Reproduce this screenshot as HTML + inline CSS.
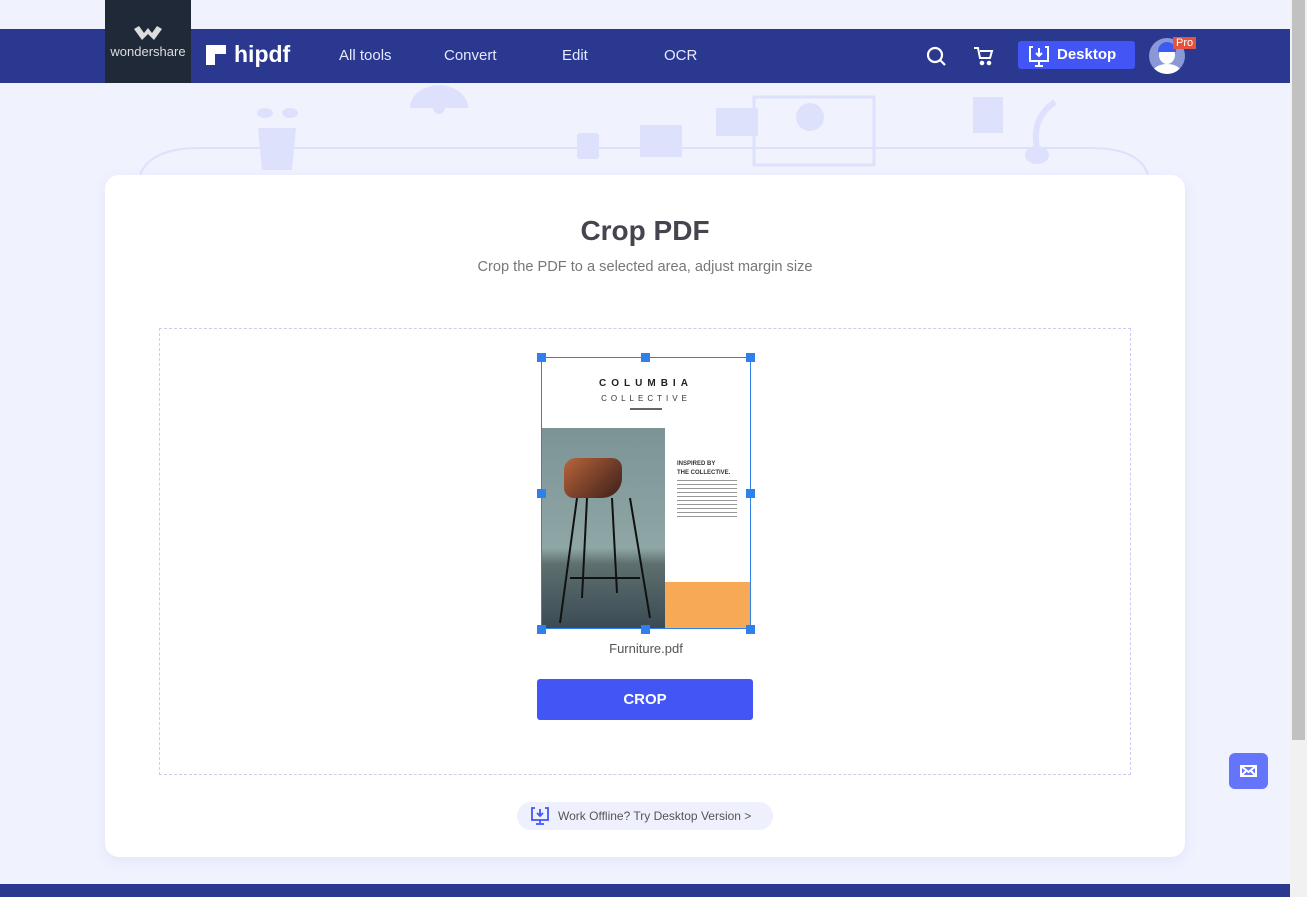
<!DOCTYPE html>
<html><head><meta charset="utf-8"><style>
*{box-sizing:border-box;margin:0;padding:0}
body{width:1307px;height:897px;overflow:hidden;background:#f0f2fe;font-family:"Liberation Sans",sans-serif;position:relative}
.nav{position:absolute;left:0;top:29px;width:1290px;height:54px;background:#2b3890}
.ws{position:absolute;left:105px;top:0;width:86px;height:83px;background:#1f2937;color:#ddd;font-size:13px;text-align:center}
.nav a{position:absolute;top:18px;color:#e6e9ff;font-size:15px;text-decoration:none}
.card{position:absolute;left:105px;top:175px;width:1080px;height:682px;background:#fff;border-radius:14px;box-shadow:0 4px 14px rgba(80,90,200,.08)}
h1{position:absolute;top:40px;width:100%;text-align:center;font-size:28px;color:#454550;font-weight:bold}
.sub{position:absolute;top:84px;width:100%;text-align:center;font-size:14.6px;color:#777}
.drop{position:absolute;left:54px;top:153px;width:972px;height:447px;border:1px dashed #c9ccf5}
.pg{position:absolute;left:381px;top:28px;width:210px;height:272px;border:1px solid #2f80ed;background:#fff;overflow:hidden}
.h{position:absolute;width:9px;height:9px;background:#2f80ed}
.btn{position:absolute;left:377px;top:350px;width:216px;height:41px;background:#4255f5;color:#fff;font-weight:bold;font-size:15px;text-align:center;line-height:41px;border-radius:3px}
.off{position:absolute;left:412px;top:627px;width:256px;height:28px;border-radius:14px;background:#eef0fd;font-size:12px;color:#555;line-height:28px;padding-left:41px}
.sb{position:absolute;right:0;top:0;width:17px;height:897px;background:#f1f1f1}
</style></head><body>
<svg style="position:absolute;left:140px;top:83px" width="1010" height="92" fill="#dde1fc">
<path d="M0 92 Q10 65 60 65 L950 65 Q1000 65 1008 92" fill="none" stroke="#dde1fc" stroke-width="2"/>
<path d="M118 45 h38 l-4 42 h-30z"/><ellipse cx="125" cy="30" rx="8" ry="5"/><ellipse cx="150" cy="30" rx="8" ry="5"/>
<path d="M270 25 a28 22 0 0 1 58 0z"/><circle cx="299" cy="25" r="6"/>
<rect x="437" y="50" width="22" height="26" rx="3"/><rect x="500" y="42" width="42" height="32"/>
<rect x="576" y="25" width="42" height="28"/><rect x="614" y="14" width="120" height="68" fill="none" stroke="#dde1fc" stroke-width="3"/><circle cx="670" cy="34" r="14"/>
<rect x="833" y="14" width="30" height="36"/><ellipse cx="897" cy="72" rx="12" ry="9"/><path d="M897 65 q-6 -30 18 -46" fill="none" stroke="#dde1fc" stroke-width="6"/>
</svg>
<div class="nav">
<div style="position:absolute;left:206px;top:16px;width:20px;height:20px;background:#fff;clip-path:polygon(0 0,100% 0,100% 45%,45% 45%,45% 100%,0 100%)"></div>
<div style="position:absolute;left:234px;top:12px;color:#fff;font-size:23px;font-weight:bold">hipdf</div>
<a style="left:339px">All tools</a><a style="left:444px">Convert</a><a style="left:562px">Edit</a><a style="left:664px">OCR</a>
<svg style="position:absolute;left:925px;top:16px" width="22" height="22" fill="none" stroke="#fff" stroke-width="2.2"><circle cx="10" cy="10" r="7"/><path d="M15 15l5 5"/></svg>
<svg style="position:absolute;left:973px;top:16px" width="22" height="22" fill="none" stroke="#fff" stroke-width="2"><path d="M1 3h4l2 10h10l2-7H7"/><circle cx="9" cy="18" r="1.3" fill="#fff"/><circle cx="16" cy="18" r="1.3" fill="#fff"/></svg>
<div style="position:absolute;left:1018px;top:12px;width:117px;height:28px;background:#4255f5;border-radius:3px;color:#fff;font-weight:bold;font-size:15px;line-height:28px;padding-left:39px">Desktop</div>
<svg style="position:absolute;left:1028px;top:16px" width="22" height="22" fill="none" stroke="#fff" stroke-width="2"><path d="M5 2H2v14h18V2h-3M11 3v8m-3-3l3 3 3-3M11 16v4M7 21h8"/></svg>
<div style="position:absolute;left:1149px;top:9px;width:36px;height:36px;border-radius:50%;background:#8b98d8;overflow:hidden"><div style="position:absolute;left:10px;top:8px;width:16px;height:18px;border-radius:50%;background:#fff"></div><div style="position:absolute;left:4px;top:26px;width:28px;height:16px;border-radius:50%;background:#fff"></div><div style="position:absolute;left:9px;top:4px;width:18px;height:10px;border-radius:9px 9px 0 0;background:#3d5af1"></div></div>
<div style="position:absolute;left:1173px;top:8px;background:#e5533c;color:#fff;font-size:11px;padding:0 3px;line-height:12px">Pro</div>
</div>
<div class="ws"><svg style="margin-top:26px" width="28" height="14" fill="#ddd"><path d="M0 3l5-3 5 7 4-5 4 5 5-7 5 3-8 11-6-6-6 6z"/></svg><div style="margin-top:1px">wondershare</div></div>
<div class="card">
<h1>Crop PDF</h1><div class="sub">Crop the PDF to a selected area, adjust margin size</div>
<div class="drop">
<div class="pg">
<div style="position:absolute;top:20px;width:100%;text-align:center;font-size:10px;font-weight:bold;letter-spacing:5px;color:#222">COLUMBIA</div>
<div style="position:absolute;top:36px;width:100%;text-align:center;font-size:8px;letter-spacing:4px;color:#333">COLLECTIVE</div>
<div style="position:absolute;top:50px;left:88px;width:32px;height:2px;background:#666"></div>
<div style="position:absolute;left:0;top:70px;width:123px;height:200px;background:linear-gradient(#7c9496,#8fa6a6 60%,#5d6f6e 68%,#3b4b55)"></div>
<div style="position:absolute;left:22px;top:100px;width:58px;height:40px;background:linear-gradient(135deg,#b9643a,#3a1f1a);border-radius:12px 10px 20px 10px"></div>
<svg style="position:absolute;left:0;top:70px" width="123" height="200" stroke="#111" stroke-width="2"><path d="M35 70L18 195M45 70L40 170M70 70L75 165M88 70L108 190M28 150h70"/></svg>
<div style="position:absolute;left:135px;top:102px;font-size:6px;font-weight:bold;color:#333;line-height:9px">INSPIRED BY<br>THE COLLECTIVE.</div>
<div style="position:absolute;left:135px;top:122px;width:60px;height:40px;background:repeating-linear-gradient(#999 0 1px,transparent 1px 4px)"></div>
<div style="position:absolute;left:123px;top:224px;width:86px;height:46px;background:#f7a955"></div>
</div>
<div class="h" style="left:377px;top:24px"></div><div class="h" style="left:481px;top:24px"></div><div class="h" style="left:586px;top:24px"></div>
<div class="h" style="left:377px;top:160px"></div><div class="h" style="left:586px;top:160px"></div>
<div class="h" style="left:377px;top:296px"></div><div class="h" style="left:481px;top:296px"></div><div class="h" style="left:586px;top:296px"></div>
<div style="position:absolute;left:0;top:312px;width:972px;text-align:center;font-size:13px;color:#555">Furniture.pdf</div>
<div class="btn">CROP</div>
</div>
<div class="off"><svg style="position:absolute;left:14px;top:5px" width="18" height="18" fill="none" stroke="#4255f5" stroke-width="1.8"><path d="M4 1H1v12h16V1h-3M9 2v7m-3-3l3 3 3-3M9 13v3M5 17h8"/></svg>Work Offline? Try Desktop Version &gt;</div>
</div>
<div style="position:absolute;left:1229px;top:753px;width:39px;height:36px;border-radius:6px;background:#6475fb"><svg style="position:absolute;left:11px;top:12px" width="17" height="12" fill="none" stroke="#fff" stroke-width="2"><rect x="1" y="1" width="15" height="10"/><path d="M1 1l7.5 6L16 1M1 11l5-5M16 11l-5-5"/></svg></div>
<div style="position:absolute;left:0;top:884px;width:1290px;height:13px;background:#2b3890"></div>
<div class="sb"><div style="position:absolute;left:2px;top:0;width:13px;height:740px;background:#c1c1c1"></div></div>
</body></html>
